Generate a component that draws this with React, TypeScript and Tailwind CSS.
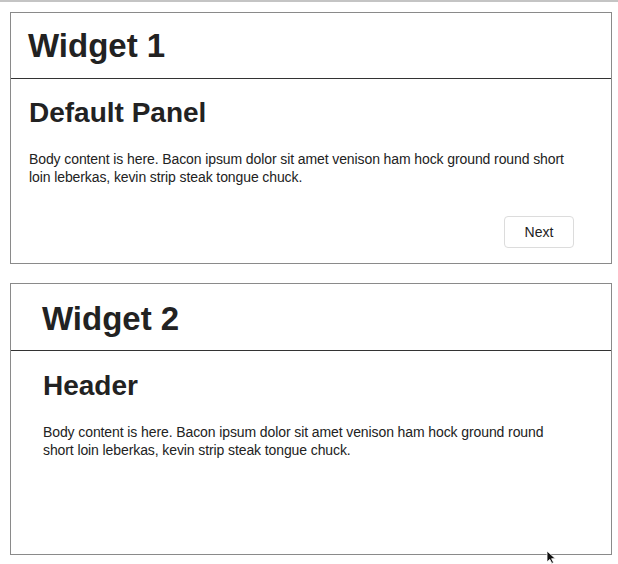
import React from "react";

const font = { fontFamily: '"Liberation Sans", Arial, sans-serif' };

const body =
  "Body content is here. Bacon ipsum dolor sit amet venison ham hock ground round short loin leberkas, kevin strip steak tongue chuck.";

const App = () => {
  return (
    <div className="relative min-h-[564px] w-[618px] bg-white text-[#222]" style={font}>
      {/* top rule */}
      <div className="h-[2px] bg-[#c4c4c4]" />

      {/* Widget 1 */}
      <div className="ml-[10px] mt-[10px] w-[602px] border border-[#8a8a8a]">
        <div className="border-b border-[#333] px-[17px] pt-[13px] pb-[12px]">
          <h1 className="text-[33px] font-bold leading-[40px]">Widget 1</h1>
        </div>
        <div className="pt-[17px] pb-[15px]">
          <div className="pl-[18px] pr-[37px]">
            <h2 className="text-[28px] font-bold leading-[34px]">Default Panel</h2>
            <p className="mt-[20px] text-[14px] leading-[18px] tracking-[-0.1px]">{body}</p>
          </div>
          <div className="mt-[30px] flex justify-end pr-[37px]">
            <button className="h-[32px] w-[70px] rounded-[4px] border border-[#dcdcdc] bg-white text-[14px] text-[#222]">
              Next
            </button>
          </div>
        </div>
      </div>

      {/* Widget 2 */}
      <div className="ml-[10px] mt-[19px] h-[272px] w-[602px] border border-[#8a8a8a]">
        <div className="border-b border-[#333] px-[31px] pt-[15px] pb-[11px]">
          <h1 className="text-[33px] font-bold leading-[40px]">Widget 2</h1>
        </div>
        <div className="pl-[32px] pr-[48px] pt-[18px]">
          <h2 className="text-[28px] font-bold leading-[34px]">Header</h2>
          <p className="mt-[20px] text-[14px] leading-[18px] tracking-[-0.1px]">{body}</p>
        </div>
      </div>

      {/* mouse pointer */}
      <svg className="absolute left-[546px] top-[550px]" width="11" height="14" viewBox="0 0 11 14">
        <path d="M1 1 L1 12 L3.8 9.4 L5.8 13.4 L7.6 12.6 L5.6 8.7 L9.4 8.7 Z" fill="#111" stroke="#fff" strokeWidth="0.8" />
      </svg>
    </div>
  );
};

export default App;
